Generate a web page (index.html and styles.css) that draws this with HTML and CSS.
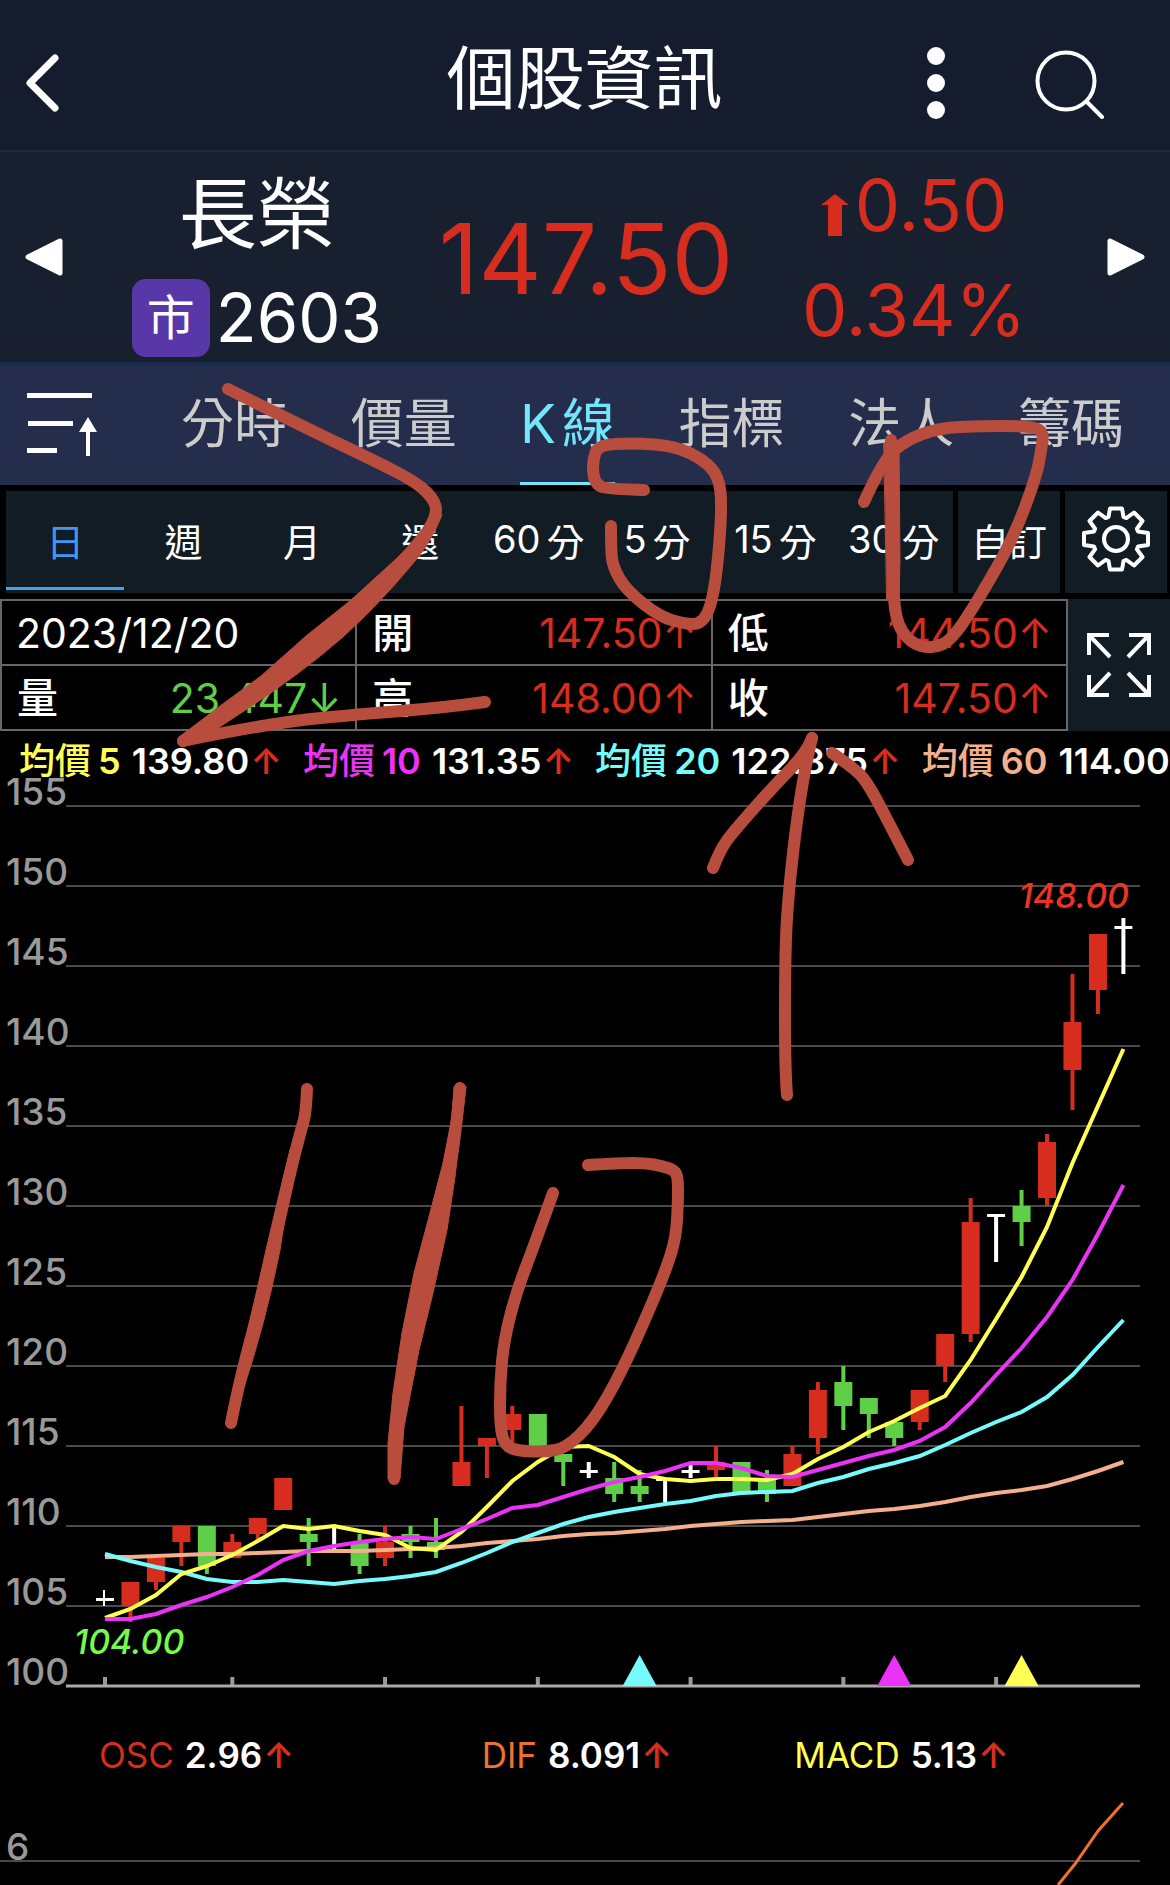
FILE: index.html
```html
<!DOCTYPE html>
<html lang="zh-Hant">
<head>
<meta charset="utf-8">
<meta name="viewport" content="width=device-width, initial-scale=1">
<title>個股資訊</title>
<link rel="stylesheet" href="styles.css">
</head>
<body>
<div class="app">
  <header class="topbar">
    <button class="icon-btn back" aria-label="返回">
      <svg width="40" height="64" viewBox="0 0 40 64"><path d="M33 7 8 32l25 25" fill="none" stroke="#fff" stroke-width="7" stroke-linecap="round" stroke-linejoin="round"/></svg>
    </button>
    <h1 class="title">個股資訊</h1>
    <div class="actions">
      <button class="icon-btn" aria-label="更多">
        <svg width="18" height="72" viewBox="0 0 18 72"><g fill="#fff"><circle cx="9" cy="9" r="9"/><circle cx="9" cy="36" r="9"/><circle cx="9" cy="63" r="9"/></g></svg>
      </button>
      <button class="icon-btn" aria-label="搜尋">
        <svg width="70" height="72" viewBox="0 0 70 72"><g fill="none" stroke="#fff" stroke-width="4" stroke-linecap="round"><circle cx="31" cy="34" r="28.5"/><path d="m52 55 15 15"/></g></svg>
      </button>
    </div>
  </header>

  <section class="quote">
    <button class="icon-btn" aria-label="上一檔">
      <svg width="38" height="38" viewBox="0 0 38 38"><path d="M35 3v32L3 19z" fill="#fff" stroke="#fff" stroke-width="5" stroke-linejoin="round"/></svg>
    </button>
    <div class="stock">
      <div class="stock-name">長榮</div>
      <div class="stock-code"><span class="badge">市</span>2603</div>
    </div>
    <div class="price">147.50</div>
    <div class="change">
      <div class="change-row">
        <svg class="change-arrow" width="28" height="42" viewBox="0 0 28 42"><path d="M14 0 28 11H21V42H7V11H0z" fill="#d62d1f"/></svg>0.50
      </div>
      <div class="change-row">0.34%</div>
    </div>
    <button class="icon-btn" aria-label="下一檔">
      <svg width="38" height="38" viewBox="0 0 38 38"><path d="M3 3v32l32-16z" fill="#fff" stroke="#fff" stroke-width="5" stroke-linejoin="round"/></svg>
    </button>
  </section>

  <nav class="tabs">
    <button class="icon-btn" aria-label="排序">
      <svg width="70" height="64" viewBox="0 0 70 64"><path d="M0 0h65v5H0zM1 28h45v5H1zM0 55h30v5H0zM61 24l9 15h-7v24h-4V39h-7z" fill="#fff"/></svg>
    </button>
    <div class="tab-list">
      <a class="tab" href="#time">分時</a>
      <a class="tab" href="#volume">價量</a>
      <a class="tab active" href="#k"><span>K</span>線</a>
      <a class="tab" href="#indicator">指標</a>
      <a class="tab" href="#legal">法人</a>
      <a class="tab" href="#chips">籌碼</a>
    </div>
  </nav>

  <div class="periods">
    <div class="period-group">
      <button class="period active">日</button>
      <button class="period">週</button>
      <button class="period">月</button>
      <button class="period">還</button>
      <button class="period"><span>60</span>分</button>
      <button class="period"><span>5</span>分</button>
      <button class="period"><span>15</span>分</button>
      <button class="period"><span>30</span>分</button>
    </div>
    <button class="period panel">自訂</button>
    <button class="period panel" aria-label="設定">
      <svg width="72" height="72" viewBox="-36 -36 72 72"><g fill="none" stroke="#fff" stroke-width="4" stroke-linejoin="round"><path d="M-7.500-22-6-30.500H6L7.500-22 10.300-20.900 18-26.500 26.500-18 20.900-10.300 22-7.500 32-6V6L22 7.500 20.900 10.300 26.500 18 18 26.500 10.300 20.900 7.500 22 6 30.500H-6L-7.500 22-10.300 20.900-18 26.500-26.500 18-20.900 10.300-22 7.500-32 6V-6L-22-7.500-20.900-10.300-26.500-18-18-26.500-10.300-20.900z"/><circle r="12"/></g></svg>
    </button>
  </div>

  <div class="ohlc">
    <table class="ohlc-table">
      <colgroup><col class="c-label"><col class="c-value"><col class="c-label"><col class="c-value"><col class="c-label"><col class="c-value"></colgroup>
      <tr><td class="date" colspan="2">2023/12/20</td><th scope="row">開</th><td class="up">147.50↑</td><th scope="row">低</th><td class="up">144.50↑</td></tr>
      <tr><th scope="row">量</th><td class="down">23,447↓</td><th scope="row">高</th><td class="up">148.00↑</td><th scope="row">收</th><td class="up">147.50↑</td></tr>
    </table>
    <button class="expand" aria-label="全螢幕">
      <svg width="64" height="64" viewBox="0 0 64 64"><path d="M22 2H2v20M2 2l21 22M42 2h20v20M62 2 41 24M2 42v20h20M2 62l21-22M62 42v20H42M62 62 41 40" fill="none" stroke="#fff" stroke-width="4"/></svg>
    </button>
  </div>

  <div class="averages">
    <div class="avg"><span class="avg-name ma5">均價<b>5</b></span><span>139.80<i>↑</i></span></div>
    <div class="avg"><span class="avg-name ma10">均價<b>10</b></span><span>131.35<i>↑</i></span></div>
    <div class="avg"><span class="avg-name ma20">均價<b>20</b></span><span>122.875<i>↑</i></span></div>
    <div class="avg"><span class="avg-name ma60">均價<b>60</b></span><span>114.00</span></div>
  </div>

  <svg class="chart" id="price-chart" viewBox="0 777 1170 938" role="img" aria-label="日K線圖"></svg>

  <div class="indicators">
    <div class="ind"><span class="osc">OSC</span><b>2.96</b><i>↑</i></div>
    <div class="ind"><span class="dif">DIF</span><b>8.091</b><i>↑</i></div>
    <div class="ind"><span class="macd">MACD</span><b>5.13</b><i>↑</i></div>
  </div>

  <svg class="chart" viewBox="0 1795 1170 90" role="img" aria-label="MACD">
    <path class="grid-line" d="M0 1861H1140"/>
    <text class="axis-label" x="6" y="1860">6</text>
    <path d="M1123 1803 1098 1831 1075 1864 1058 1885" fill="none" stroke="#ee7130" stroke-width="3"/>
  </svg>

  <svg class="ink" id="ink" viewBox="0 0 1170 1885" aria-hidden="true"></svg>
</div>
<script src="chart.js"></script>
</body>
</html>
```
FILE: styles.css
```css
* { box-sizing: border-box; }

body {
  margin: 0;
  background: #000;
  color: #fff;
  font-family: Inter, "Noto Sans CJK TC", sans-serif;
  font-weight: 400;
}

button {
  margin: 0;
  padding: 0;
  border: 0;
  background: none;
  color: inherit;
  font: inherit;
}

svg { display: block; }
i { font-style: normal; color: #d62d1f; }

.app { position: relative; overflow: hidden; }
.icon-btn { display: flex; align-items: center; justify-content: center; }

.topbar {
  display: grid;
  grid-template-columns: 1fr auto 1fr;
  align-items: center;
  height: 152px;
  padding: 15px 65px 0 22px;
  background: #141c2e;
  border-bottom: 2px solid #152c4b;
}
.back { justify-self: start; }
.title {
  margin: 0 0 8px 42px;
  font-size: 69px;
  font-weight: 400;
  line-height: 76px;
}
.actions { display: flex; justify-content: flex-end; gap: 90px; }

.quote {
  display: flex;
  align-items: center;
  justify-content: space-between;
  height: 213px;
  padding: 0 25px;
  background: #18202f;
  border-bottom: 3px solid #152c4b;
}
.stock { display: flex; flex-direction: column; align-items: center; gap: 15px; padding-top: 8px; }
.stock-name { font-size: 78px; line-height: 98px; }
.stock-code { display: flex; align-items: center; gap: 6px; font-size: 67px; line-height: 78px; }
.badge {
  width: 78px;
  height: 78px;
  border-radius: 14px;
  background: #5838a8;
  font-size: 48px;
  line-height: 78px;
  text-align: center;
}
.price { margin-left: -12px; padding-top: 4px; color: #d62d1f; font-size: 98px; line-height: 120px; }
.change { margin-right: 12px; color: #d62d1f; font-size: 72px; }
.change-row { display: flex; align-items: center; justify-content: center; gap: 6px; line-height: 105px; }
.change-arrow { margin-top: 20px; }

.tabs {
  display: flex;
  align-items: center;
  height: 120px;
  padding: 0 46px 0 27px;
  background: #242d4b;
}
.tab-list { flex: 1; display: flex; justify-content: space-between; padding-left: 84px; }
.tab {
  display: flex;
  gap: 6px;
  height: 120px;
  border-bottom: 3px solid transparent;
  color: #ccc;
  font-size: 53px;
  line-height: 118px;
  text-decoration: none;
}
.tab.active { color: #74e6fb; border-color: #74e6fb; }

.periods { display: flex; gap: 5px; padding: 6px 3px 6px 6px; }
.period-group { flex: 1; display: flex; background: #121c24; }
.period {
  flex: 1;
  display: flex;
  align-items: center;
  justify-content: center;
  gap: 6px;
  height: 102px;
  padding-bottom: 6px;
  font-size: 38px;
}
.period.active { color: #3f98f2; box-shadow: inset 0 -3px #121c24, inset 0 -6px #3fa4f5; }
.period.panel { flex: 0 0 102px; background: #121c24; }

.ohlc { display: flex; }
.ohlc-table { flex: 1; table-layout: fixed; border-collapse: collapse; border: 2px solid #666; }
.ohlc-table .c-label { width: 7.1%; }
.ohlc-table .c-value { width: 26.2%; }
.ohlc-table th, .ohlc-table td {
  height: 65px;
  padding: 1px 0 0 15px;
  border: 2px solid #666;
  font-size: 41px;
  line-height: 60px;
}
.ohlc-table th { border-right: 0; font-weight: 500; text-align: left; }
.ohlc-table td { padding: 1px 14px 0 0; border-left: 0; text-align: right; }
.ohlc-table .date { padding-left: 14px; text-align: left; }
.up { color: #d62d1f; }
.down { color: #5fcf48; }
.expand { flex: 0 0 102px; display: flex; align-items: center; justify-content: center; background: #121c24; }

.averages {
  display: flex;
  gap: 21px;
  height: 46px;
  padding: 0 2px 0 19px;
  font-size: 36px;
  font-weight: 600;
  line-height: 60px;
  white-space: nowrap;
}
.avg { display: flex; gap: 11px; }
.avg i, .ind i { margin-left: 1px; font-weight: 600; }
.avg-name { display: flex; gap: 7px; font-weight: 500; }
.avg-name b { font-weight: 600; }
.ma5, .macd { color: #ffff54; }
.ma10 { color: #ea33f7; }
.ma20 { color: #75fbfd; }
.ma60 { color: #f4af8c; }
.osc { color: #d62d1f; }
.dif { color: #ee7130; }

.chart { width: 100%; height: auto; overflow: visible; }
.grid-line { stroke: #4a4a4a; stroke-width: 2; }
.axis-line { stroke: #aaa; stroke-width: 3; }
.tick { stroke: #999; stroke-width: 4; }
.axis-label { fill: #999; font-size: 37px; font-weight: 500; }
.extreme { font-size: 34px; font-style: italic; font-weight: 500; }

.indicators {
  display: grid;
  grid-template-columns: 382fr 312fr 375fr;
  align-items: center;
  height: 80px;
  padding-left: 99px;
  font-size: 35px;
}
.ind { display: flex; }
.ind b { margin-left: 11px; font-weight: 600; }

.ink {
  position: absolute;
  top: 0;
  left: 0;
  width: 100%;
  height: auto;
  pointer-events: none;
  fill: none;
  stroke: #b84d3d;
  stroke-width: 12;
  stroke-linecap: round;
  stroke-linejoin: round;
}
.ink .solid { fill: #b84d3d; stroke-width: 1; }
```
FILE: chart.js
```js
const NS = 'http://www.w3.org/2000/svg';
const RED = '#d62d1f', GREEN = '#5fcf48', WHITE = '#fff';
const X0 = 105, STEP = 25.46;
const px = i => X0 + STEP * i;
const py = v => 1686 - 16 * (v - 100);

function add(parent, tag, attrs, text) {
  const el = document.createElementNS(NS, tag);
  for (const k in attrs) el.setAttribute(k, attrs[k]);
  if (text) el.textContent = text;
  parent.appendChild(el);
}

// open, high, low, close for each trading day
const days = [
  [105.5,106,105,105.5],[105,106.5,104,106.5],[106.5,108,106,108],[109,110,107.5,110],[110,110,107,107.5],
  [108,109.5,108,109],[109.5,110.5,109,110.5],[111,113,111,113],[109.5,110.5,107.5,109],[108.5,110,108.5,108.5],
  [109,109.5,107,107.5],[108,110,107.5,109],[109.5,110,108,109],[109,110.5,108,108.5],[112.5,117.5,112.5,114],
  [115,115.5,113,115.5],[116,117.5,115,117],[117,117,115,115],[114.5,114.5,112.5,114],[113.5,114,113,113.5],
  [113,114,111.5,112],[112.5,113.5,111.5,112],[113,113,111.5,113],[113.5,114,113,113.5],[113.5,115,113,114],
  [114,114,112,112],[113,113.5,111.5,112],[112.5,115,112.5,114.5],[115.5,119,114.5,118.5],[119,120,116,117.5],
  [118,118,115.5,117],[116.5,116.5,115,115.5],[116.5,118.5,116,118.5],[120,122,119,122],[122,130.5,121.5,129],
  [129.5,129.5,126.5,129.5],[130,131,127.5,129],[130.5,134.5,130,134],[138.5,144.5,136,141.5],[143.5,147,142,147],
  [147.5,148,144.5,147.5]
];

// moving averages, one chart height for each day
const averages = {
  '#f4af8c': [1557,1557,1556,1555,1554,1554,1553,1552,1551,1551,1551,1550,1549,1548,1546,1543,1541,1539,1536,1534,1533,1531,1529,1526,1524,1522,1521,1520,1517,1514,1511,1509,1506,1502,1497,1493,1490,1486,1479,1471,1462],
  '#75fbfd': [1554,1561,1567,1572,1579,1582,1582,1580,1582,1584,1581,1579,1576,1572,1563,1553,1542,1533,1524,1517,1512,1508,1504,1501,1496,1493,1492,1491,1483,1477,1469,1463,1456,1445,1433,1422,1412,1397,1375,1347,1320],
  '#ffff54': [1618,1609,1595,1574,1566,1555,1541,1526,1529,1526,1531,1535,1548,1550,1532,1507,1481,1462,1447,1446,1457,1474,1479,1481,1479,1479,1480,1474,1459,1447,1432,1421,1408,1396,1360,1319,1277,1227,1163,1106,1049],
  '#ea33f7': [1619,1619,1614,1605,1597,1587,1575,1560,1551,1546,1542,1539,1537,1539,1529,1519,1508,1505,1497,1489,1482,1477,1471,1463,1463,1468,1476,1477,1470,1463,1456,1450,1441,1427,1403,1375,1348,1317,1280,1234,1185]
};

const chart = document.getElementById('price-chart');
for (let v = 105; v <= 155; v += 5) add(chart, 'path', { class: 'grid-line', d: `M66 ${py(v)}H1140` });
for (let v = 100; v <= 155; v += 5) add(chart, 'text', { class: 'axis-label', x: 6, y: py(v) - 1 }, String(v));

days.forEach(([o, h, l, c], i) => {
  const color = c > o ? RED : c < o ? GREEN : WHITE;
  const top = py(Math.max(o, c));
  add(chart, 'rect', { x: px(i) - 2, y: py(h), width: i ? 4 : 2, height: py(l) - py(h), fill: color });
  add(chart, 'rect', { x: px(i) - 9, y: top, width: 18, height: Math.max(3, py(Math.min(o, c)) - top), fill: color });
});

[0, 5, 11, 17, 23, 29, 35].forEach(i => add(chart, 'path', { class: 'tick', d: `M${px(i)} 1677V1686` }));
for (const color in averages) {
  add(chart, 'polyline', {
    points: averages[color].map((y, i) => `${px(i)},${y}`).join(' '),
    fill: 'none', stroke: color, 'stroke-width': 4
  });
}
add(chart, 'path', { class: 'axis-line', d: 'M66 1686H1140' });
[[21, '#75fbfd'], [31, '#ea33f7'], [36, '#ffff54']].forEach(([i, fill]) =>
  add(chart, 'path', { fill, d: `M${px(i) - 17} 1686L${px(i)} 1655L${px(i) + 17} 1686Z` }));
add(chart, 'text', { class: 'extreme', x: 1129, y: 908, 'text-anchor': 'end', fill: '#ee3324' }, '148.00');
add(chart, 'text', { class: 'extreme', x: 74, y: 1654, fill: '#75fb4c' }, '104.00');

// pen strokes drawn over the page
const strokes = [
  [[228,389],[306,428],[373,460],[418,483],[436,502],[436,517],[422,540],[358,610],[255,693],[183,741]],
  [[183,741],[269,723],[373,713],[440,708],[485,702]],
  [[644,490],[607,489],[597,485],[593,475],[593,460],[598,445],[634,443],[675,446],[704,460],[719,477],[722,507],[717,573],[710,610],[700,624],[686,624],[660,617],[626,590],[613,567],[611,550],[611,526]],
  [[864,502],[883,460],[906,440],[939,428],[980,426],[1025,426],[1044,430],[1041,452],[1036,477],[1014,537],[980,597],[952,640],[932,649],[910,643],[895,620],[893,573],[893,500],[891,440]],
  [[812,738],[805,767],[795,833],[787,910],[785,967],[785,1070],[787,1095]],
  [[812,738],[807,752],[773,787],[733,832],[720,850],[713,868]],
  [[832,753],[857,770],[870,787],[890,825],[908,860]],
  [[307,1089],[306,1113],[301,1130],[290,1173],[273,1250],[254,1327],[239,1383],[231,1423]],
  [[460,1088],[456,1130],[448,1180],[426,1270],[407,1360],[396,1430],[394,1479]],
  [[553,1193],[535,1243],[516,1293],[504,1340],[500,1383],[500,1427],[505,1446],[519,1451],[545,1452],[566,1448],[593,1422],[621,1373],[648,1313],[667,1267],[676,1237],[678,1203],[678,1177],[674,1170],[662,1166],[645,1163],[621,1163],[588,1165]]
];
const ink = document.getElementById('ink');
strokes.forEach(p => {
  let d = `M${p[0]}`;
  for (let i = 1; i < p.length - 1; i++) {
    const last = i === p.length - 2;
    const x = last ? p[i + 1][0] : (p[i][0] + p[i + 1][0]) / 2;
    const y = last ? p[i + 1][1] : (p[i][1] + p[i + 1][1]) / 2;
    d += `Q${p[i]} ${x},${y}`;
  }
  add(ink, 'path', { d });
});
// the places where the pen was pressed harder
[
  'M442 515Q430 545 410 567 380 603 343 637 298 676 244 711L215 730 178 738 220 706 261 676 306 636 351 600 395 560 425 530Z',
  'M466 1087 461 1127 455 1177 447 1230 433 1293 419 1350 404 1427 400 1479 388 1479 388 1443 393 1393 402 1333 414 1273 430 1213 443 1163 452 1117 454 1087Z',
  'M884 443 899 443 900 560 899 600 887 600Z',
  'M290 1150Q290 1190 280 1250 265 1325 243 1390L234 1390Q248 1330 266 1250 280 1190 290 1150Z'
].forEach(d => add(ink, 'path', { class: 'solid', d }));
```
